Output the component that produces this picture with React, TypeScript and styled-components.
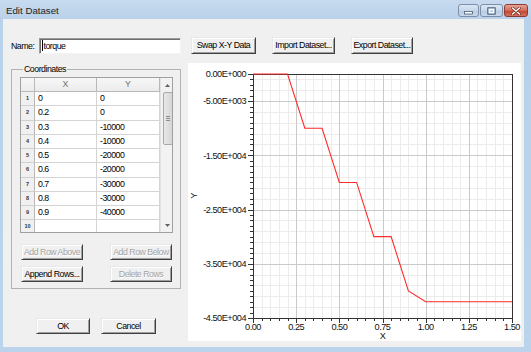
import React from 'react';
import styled, { createGlobalStyle } from 'styled-components';

const UI_FONT = `"Liberation Sans", Arial, sans-serif`;

const GlobalStyle = createGlobalStyle`
  html, body { margin: 0; padding: 0; }
  body {
    width: 531px; height: 352px; overflow: hidden;
    font-family: "Liberation Sans", Arial, sans-serif;
    background: #bdd3ec;
  }
`;

const Window = styled.div`
  width: 531px; height: 352px; box-sizing: border-box;
  display: flex; flex-direction: column;
  padding: 0 7px 5px 3px;
  background: linear-gradient(#c7daef 0px, #bad1ea 19px, #bcd3ec 100%);
`;

const TitleBar = styled.div`
  height: 19px; flex: none;
  display: flex; align-items: center; justify-content: space-between;
  margin-right: -4px;
`;

const TitleText = styled.span`
  padding-left: 3px;
  font: 9.7px "Liberation Sans", Arial, sans-serif;
  color: #1e1e1e;
  margin-top: 1px;
`;

const CaptionGroup = styled.div`
  display: flex; gap: 1px; align-self: flex-start; margin-top: 4px;
`;

const CaptionButton = styled.div<{ $kind: 'min' | 'max' | 'close' }>`
  width: ${p => (p.$kind === 'close' ? 24 : p.$kind === 'max' ? 23 : 21)}px;
  height: 13px; box-sizing: border-box;
  border: 1px solid ${p => (p.$kind === 'close' ? '#8b3b33' : '#7d8ea8')};
  border-radius: 3px;
  background: ${p =>
    p.$kind === 'close'
      ? 'linear-gradient(#e6a497, #d46a56 50%, #c4432f 51%, #d2705c)'
      : 'linear-gradient(#dce8f5, #c6d7ea 50%, #b7cbe3 51%, #c9d9ec)'};
  display: flex; align-items: center; justify-content: center;
`;

const Client = styled.div`
  flex: 1;
  background: #f0f0f0;
  padding: 18px 3px 6px 8px;
  display: flex; flex-direction: column;
  font: 8.8px ${UI_FONT};
  letter-spacing: -0.5px;
  color: #000;
`;

const TopRow = styled.div`
  display: flex; align-items: center; height: 17px;
`;

const FieldLabel = styled.span`
  width: 28px; flex: none;
`;

const TextBox = styled.div`
  width: 142px; height: 16px; box-sizing: border-box;
  background: #fff;
  border: 1px solid; border-color: #9a9a9a #f4f4f4 #f4f4f4 #9a9a9a;
  box-shadow: inset 1px 1px 0 #6e6e6e;
  display: flex; align-items: center; padding-left: 2px;
`;

const Caret = styled.span`
  width: 1px; height: 11px; background: #000; margin-right: 0.5px;
`;

const Button = styled.button<{ $w: number; $ml?: number }>`
  width: ${p => p.$w}px; height: ${p => (p.$ml !== undefined ? 17 : 16)}px;
  margin-left: ${p => p.$ml ?? 0}px;
  box-sizing: border-box; padding: 0; flex: none;
  background: #f0f0f0;
  border: 1px solid; border-color: #e8e8e8 #404040 #404040 #e8e8e8;
  box-shadow: inset 1px 1px 0 #fff, inset -1px -1px 0 #a0a0a0;
  font: 8.8px ${UI_FONT};
  letter-spacing: -0.5px;
  white-space: nowrap;
  color: ${p => (p.disabled ? '#a3a3a3' : '#000')};
  text-shadow: ${p => (p.disabled ? '0.5px 0.5px 0 #fff' : 'none')};
  line-height: 1;
`;

const Body = styled.div`
  display: flex; margin-top: 9px; flex: 1;
`;

const LeftColumn = styled.div`
  width: 177px; flex: none; display: flex; flex-direction: column;
`;

const GroupBox = styled.fieldset`
  margin: 0; width: 170px; box-sizing: border-box; min-width: 0;
  border: 1px solid #b2b2b2;
  padding: 1px 7px 6px 8px;
`;

const Legend = styled.legend`
  padding: 0 1px; margin-left: 3px;
  font: 8.8px ${UI_FONT}; line-height: 13px;
  letter-spacing: -0.5px;
`;

const TableFrame = styled.div`
  width: 153px; height: 156px; box-sizing: border-box;
  border: 1px solid #a0a0a0;
  display: flex; background: #fff; overflow: hidden;
`;

const Grid = styled.div`
  display: grid;
  grid-template-columns: 14px 62px 63px;
  grid-template-rows: 14px;
  grid-auto-rows: 14.25px;
  align-content: start;
`;

const HeadCell = styled.div`
  background: linear-gradient(#f7f7f7, #ececec);
  border-right: 1px solid #b8b8b8; border-bottom: 1px solid #b8b8b8;
  color: #707070; text-align: center; line-height: 13px;
  letter-spacing: 0;
`;

const RowNum = styled.div`
  background: #f0f0f0;
  border-right: 1px solid #b8b8b8; border-bottom: 1px solid #d0d0d0;
  font: bold 5.5px "Liberation Sans", Arial, sans-serif;
  letter-spacing: 0;
  color: #333; text-align: center; line-height: 12px;
`;

const Cell = styled.div`
  border-right: 1px solid #d4d4d4; border-bottom: 1px solid #d4d4d4;
  padding-left: 3px; line-height: 13px; overflow: hidden;
`;

const ScrollBar = styled.div`
  width: 13px; flex: none; background: #f2f2f2;
  border-left: 1px solid #e2e2e2;
  display: flex; flex-direction: column; align-items: center;
`;

const ScrollArrow = styled.div`
  height: 14px; width: 100%; display: flex; align-items: center; justify-content: center;
`;

const ScrollThumb = styled.div`
  width: 10px; height: 53px; box-sizing: border-box;
  border: 1px solid #a8a8a8; border-radius: 2px;
  background: linear-gradient(90deg, #e8e8e8, #d6d6d6);
  display: flex; flex-direction: column; align-items: center; justify-content: center; gap: 1px;
`;

const Grip = styled.div`
  width: 4px; height: 1px; background: #8c8c8c;
`;

const ScrollSpacer = styled.div` flex: 1; `;

const ButtonGrid = styled.div`
  margin-top: 11px;
  padding: 0 1px;
  width: 153px; box-sizing: border-box;
  display: grid; grid-template-columns: 62px 62px; justify-content: space-between;
  row-gap: 6px;
`;

const DialogButtons = styled.div`
  display: flex; gap: 11px; margin-top: 29px; padding-left: 25px;
`;

const ChartPanel = styled.div`
  width: 333px; height: 278px; flex: none; background: #fff;
`;

const W = 333, H = 278;
const PX0 = 65, PX1 = 324, PY0 = 11, PY1 = 255;
const xs = (v: number) => PX0 + (v / 1.5) * (PX1 - PX0);
const ys = (v: number) => PY0 + (-v / 45000) * (PY1 - PY0);

const data: [number, number][] = [
  [0, 0], [0.2, 0], [0.3, -10000], [0.4, -10000], [0.5, -20000], [0.6, -20000],
  [0.7, -30000], [0.8, -30000], [0.9, -40000], [1.0, -42000], [1.5, -42000],
];

const rows: [string, string][] = [
  ['0', '0'], ['0.2', '0'], ['0.3', '-10000'], ['0.4', '-10000'], ['0.5', '-20000'],
  ['0.6', '-20000'], ['0.7', '-30000'], ['0.8', '-30000'], ['0.9', '-40000'], ['', ''],
];

function Chart() {
  const minorX: number[] = [];
  for (let i = 1; i < 30; i++) if (i % 5 !== 0) minorX.push(i * 0.05);
  const majorX = [0.25, 0.5, 0.75, 1.0, 1.25];
  const minorY: number[] = [];
  for (let v = -43000; v < 0; v += 2000) if ((v + 5000) % 10000 !== 0) minorY.push(v);
  const majorY = [-5000, -15000, -25000, -35000];
  const yLabels: [number, string][] = [
    [0, '0.00E+000'], [-5000, '-5.00E+003'], [-15000, '-1.50E+004'],
    [-25000, '-2.50E+004'], [-35000, '-3.50E+004'], [-45000, '-4.50E+004'],
  ];
  const xLabels = ['0.00', '0.25', '0.50', '0.75', '1.00', '1.25', '1.50'];
  const yTicks: number[] = [];
  for (let v = 0; v >= -45000; v -= 1000) yTicks.push(v);
  const xTicks: number[] = [];
  for (let i = 0; i <= 30; i++) xTicks.push(i * 0.05);
  const pts = data.map(([x, y]) => `${xs(x).toFixed(2)},${ys(y).toFixed(2)}`).join(' ');
  return (
    <svg width={W} height={H} viewBox={`0 0 ${W} ${H}`} style={{ display: 'block' }}>
      <g shapeRendering="crispEdges">
        {minorX.map(v => (
          <line key={'mx' + v} x1={Math.round(xs(v)) + 0.5} x2={Math.round(xs(v)) + 0.5} y1={PY0} y2={PY1} stroke="#ececec" />
        ))}
        {minorY.map(v => (
          <line key={'my' + v} y1={Math.round(ys(v)) + 0.5} y2={Math.round(ys(v)) + 0.5} x1={PX0} x2={PX1} stroke="#ececec" />
        ))}
        {majorX.map(v => (
          <line key={'Mx' + v} x1={Math.round(xs(v)) + 0.5} x2={Math.round(xs(v)) + 0.5} y1={PY0} y2={PY1} stroke="#cacaca" />
        ))}
        {majorY.map(v => (
          <line key={'My' + v} y1={Math.round(ys(v)) + 0.5} y2={Math.round(ys(v)) + 0.5} x1={PX0} x2={PX1} stroke="#cacaca" />
        ))}
        {yTicks.map(v => {
          const major = yLabels.some(l => l[0] === v);
          return (
            <line key={'ty' + v} y1={Math.round(ys(v)) + 0.5} y2={Math.round(ys(v)) + 0.5}
              x1={PX0 - (major ? 5 : 3)} x2={PX0} stroke="#333" />
          );
        })}
        {xTicks.map((v, i) => (
          <line key={'tx' + i} x1={Math.round(xs(v)) + 0.5} x2={Math.round(xs(v)) + 0.5}
            y1={PY1} y2={PY1 + (i % 5 === 0 ? 5 : 3)} stroke="#333" />
        ))}
        <rect x={PX0 + 0.5} y={PY0 + 0.5} width={PX1 - PX0} height={PY1 - PY0} fill="none" stroke="#333" />
      </g>
      <polyline points={pts} fill="none" stroke="#ff2a2a" strokeWidth={1.1} />
      <g fontFamily='"Liberation Sans", Arial, sans-serif' fontSize="9.2" fill="#111">
        {yLabels.map(([v, t]) => (
          <text key={t} x={PX0 - 7} y={ys(v) + 3.3} textAnchor="end">{t}</text>
        ))}
        {xLabels.map((t, i) => (
          <text key={t} x={xs(i * 0.25)} y={PY1 + 12} textAnchor="middle">{t}</text>
        ))}
        <text x={(PX0 + PX1) / 2} y={PY1 + 21} textAnchor="middle">X</text>
        <text x={9} y={(PY0 + PY1) / 2} textAnchor="middle" transform={`rotate(-90 9 ${(PY0 + PY1) / 2})`}>Y</text>
      </g>
    </svg>
  );
}

function CaptionGlyph({ kind }: { kind: 'min' | 'max' | 'close' }) {
  if (kind === 'min')
    return (
      <svg width="9" height="9" viewBox="0 0 9 9">
        <rect x="0.5" y="5.5" width="8" height="2.5" fill="#fff" stroke="#4a5a74" strokeWidth="0.8" />
      </svg>
    );
  if (kind === 'max')
    return (
      <svg width="9" height="8" viewBox="0 0 9 8">
        <rect x="0.8" y="0.8" width="7.4" height="6.4" fill="none" stroke="#4a5a74" strokeWidth="1" />
        <rect x="2.4" y="2.6" width="4.2" height="3" fill="none" stroke="#fff" strokeWidth="1" />
      </svg>
    );
  return (
    <svg width="10" height="8" viewBox="0 0 10 8">
      <path d="M1.5 1 L8.5 7 M8.5 1 L1.5 7" stroke="#5a1c12" strokeWidth="2.6" strokeLinecap="round" />
      <path d="M1.5 1 L8.5 7 M8.5 1 L1.5 7" stroke="#fff" strokeWidth="1.6" strokeLinecap="round" />
    </svg>
  );
}

export default function App() {
  return (
    <>
      <GlobalStyle />
      <Window>
        <TitleBar>
          <TitleText>Edit Dataset</TitleText>
          <CaptionGroup>
            <CaptionButton $kind="min"><CaptionGlyph kind="min" /></CaptionButton>
            <CaptionButton $kind="max"><CaptionGlyph kind="max" /></CaptionButton>
            <CaptionButton $kind="close"><CaptionGlyph kind="close" /></CaptionButton>
          </CaptionGroup>
        </TitleBar>
        <Client>
          <TopRow>
            <FieldLabel>Name:</FieldLabel>
            <TextBox><Caret />torque</TextBox>
            <Button $w={65} $ml={10}>Swap X-Y Data</Button>
            <Button $w={63} $ml={16}>Import Dataset...</Button>
            <Button $w={62} $ml={16}>Export Dataset...</Button>
          </TopRow>
          <Body>
            <LeftColumn>
              <GroupBox>
                <Legend>Coordinates</Legend>
                <TableFrame>
                  <Grid>
                    <HeadCell />
                    <HeadCell>X</HeadCell>
                    <HeadCell>Y</HeadCell>
                    {rows.map(([x, y], i) => (
                      <React.Fragment key={i}>
                        <RowNum>{i + 1}</RowNum>
                        <Cell>{x}</Cell>
                        <Cell>{y}</Cell>
                      </React.Fragment>
                    ))}
                  </Grid>
                  <ScrollBar>
                    <ScrollArrow>
                      <svg width="5" height="3" viewBox="0 0 5 3"><path d="M0 3 L2.5 0 L5 3 Z" fill="#606060" /></svg>
                    </ScrollArrow>
                    <ScrollThumb><Grip /><Grip /><Grip /></ScrollThumb>
                    <ScrollSpacer />
                    <ScrollArrow>
                      <svg width="5" height="3" viewBox="0 0 5 3"><path d="M0 0 L2.5 3 L5 0 Z" fill="#606060" /></svg>
                    </ScrollArrow>
                  </ScrollBar>
                </TableFrame>
                <ButtonGrid>
                  <Button $w={62} disabled>Add Row Above</Button>
                  <Button $w={62} disabled>Add Row Below</Button>
                  <Button $w={62}>Append Rows...</Button>
                  <Button $w={62} disabled>Delete Rows</Button>
                </ButtonGrid>
              </GroupBox>
              <DialogButtons>
                <Button $w={54}>OK</Button>
                <Button $w={55}>Cancel</Button>
              </DialogButtons>
            </LeftColumn>
            <ChartPanel>
              <Chart />
            </ChartPanel>
          </Body>
        </Client>
      </Window>
    </>
  );
}
